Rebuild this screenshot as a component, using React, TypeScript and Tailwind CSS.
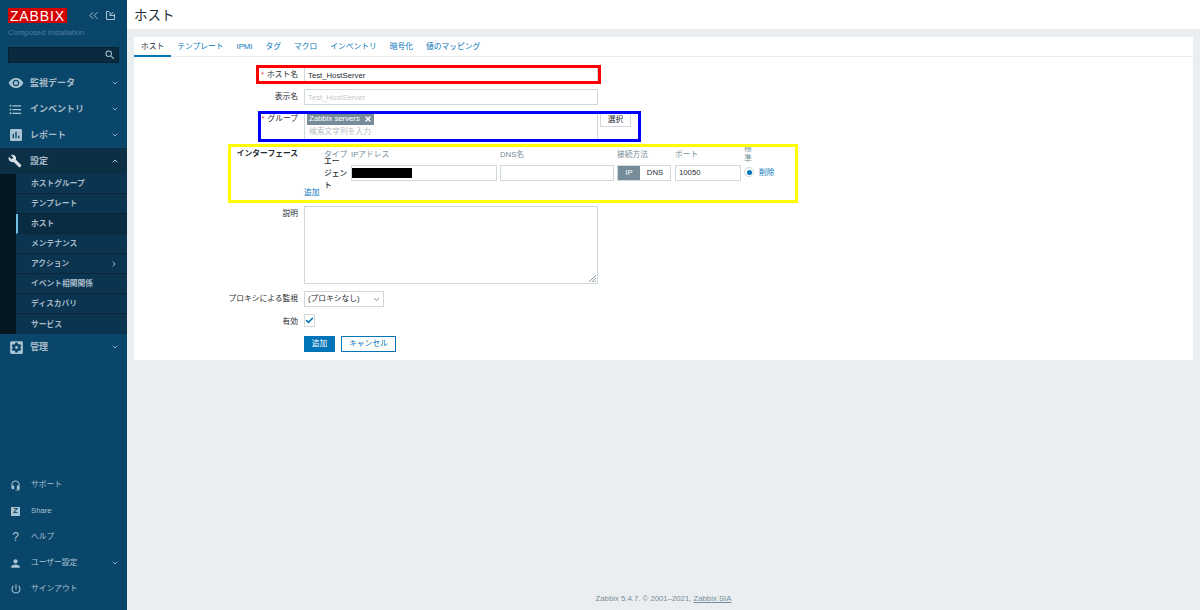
// App.tsx
import { ReactNode } from "react";
import { ChevronDown, ChevronRight, ChevronUp, ChevronsLeft, Check, X } from "lucide-react";
import {
  MdAssessment,
  MdBuild,
  MdFormatListBulleted,
  MdHeadsetMic,
  MdPerson,
  MdPowerSettingsNew,
  MdSearch,
  MdSettingsApplications,
  MdVisibility,
} from "react-icons/md";

const subItems = ["ホストグループ", "テンプレート", "ホスト", "メンテナンス", "アクション", "イベント相関関係", "ディスカバリ", "サービス"];
const tabs = ["ホスト", "テンプレート", "IPMI", "タグ", "マクロ", "インベントリ", "暗号化", "値のマッピング"];

function MenuItem({ icon, label, open, active }: { icon: ReactNode; label: string; open?: boolean; active?: boolean }) {
  return (
    <div className={`flex h-[26px] items-center pl-2 pr-[8px] ${active ? "bg-[#0b2f45]" : ""}`}>
      <div className="flex w-[22px] justify-start text-[#a9c4d4]">{icon}</div>
      <span className="flex-1 pt-[2px] text-[9px] font-bold text-[#a9bcc9]">{label}</span>
      {open ? <ChevronUp size={8} strokeWidth={3} className="text-[#b4c6d2]" /> : <ChevronDown size={8} strokeWidth={3} className="text-[#8fb0c4]" />}
    </div>
  );
}

function BottomItem({ icon, label, chevron }: { icon: ReactNode; label: string; chevron?: boolean }) {
  return (
    <div className="flex h-[26px] items-center pl-[8px] pr-[8px]">
      <div className="flex w-[23px] justify-center pr-[8px] text-[#a9c4d4]">{icon}</div>
      <span className="flex-1 text-[7.75px] text-[#a9c4d4]">{label}</span>
      {chevron && <ChevronDown size={8} strokeWidth={3} className="text-[#8fb0c4]" />}
    </div>
  );
}

function Row({ label, required, bold, children, className }: { label: string; required?: boolean; bold?: boolean; children: ReactNode; className?: string }) {
  return (
    <div className={`flex ${className ?? ""}`}>
      <div className={`w-[164px] pt-[2px] text-right text-[7.75px] leading-[12px] text-[#1f2c33] ${bold ? "font-bold" : ""}`}>
        {required && <span className="mr-[3px] text-[#e33734]">*</span>}
        {label}
      </div>
      <div className="ml-[6px] min-w-0 flex-1">{children}</div>
    </div>
  );
}

export default function App() {
  return (
    <div className="flex h-[610px] w-[1200px] overflow-hidden bg-[#ebeef0] font-['Liberation_Sans','Noto_Sans_CJK_JP',sans-serif]">
      {/* sidebar */}
      <aside className="flex h-full w-[127px] shrink-0 flex-col bg-[#0a466a]">
        <div className="flex items-start justify-between pl-2 pr-[12px] pt-2">
          <div className="flex h-[15px] w-[59px] items-center justify-center bg-[#d40000] text-[14px] leading-none tracking-[0.9px] text-white">ZABBIX</div>
          <div className="flex items-center gap-[5px] text-[#a9c4d4]">
            <ChevronsLeft size={15} strokeWidth={1.5} />
            <svg width="9" height="9" viewBox="0 0 9 9" fill="none" stroke="currentColor">
              <path d="M3 .5H.5v8h8V3" />
              <path d="M4 1v3.5h4" />
              <path d="M4 4.5 7.5 1" />
            </svg>
          </div>
        </div>
        <div className="ml-2 mt-[4px] text-[7.75px] leading-[12px] text-[#4f7f9c]">Composed installation</div>
        <div className="mx-2 mt-[8px] flex h-[16px] items-center justify-end border border-[#06202f] bg-[#0a2a3f] pr-[2px] text-[#a9c4d4]">
          <MdSearch size={12} />
        </div>

        <div className="mt-[7px]">
          <MenuItem icon={<MdVisibility size={16} />} label="監視データ" />
          <MenuItem icon={<MdFormatListBulleted size={15} />} label="インベントリ" />
          <MenuItem icon={<MdAssessment size={16} />} label="レポート" />
          <MenuItem icon={<MdBuild size={14} className="text-[#d5dfe5]" />} label="設定" open active />
          <div className="flex">
            <div className="w-4 bg-[#04161f]" />
            <div className="flex-1 bg-[#0b3450]">
              {subItems.map((s) => (
                <div
                  key={s}
                  className={`flex h-[20px] items-center justify-between border-b border-[#0a2638] pr-[9px] pt-[1px] text-[7.75px] font-bold text-[#a9bcc9] last:border-b-0 ${
                    s === "ホスト" ? "border-l-[2px] border-l-[#74bfe8] bg-[#0a2c43] pl-[13px]" : "pl-[15px]"
                  }`}
                >
                  <span>{s}</span>
                  {s === "アクション" && <ChevronRight size={8} strokeWidth={3} />}
                </div>
              ))}
            </div>
          </div>
          <MenuItem icon={<MdSettingsApplications size={17} />} label="管理" />
        </div>

        <div className="mb-[8px] mt-auto">
          <BottomItem icon={<MdHeadsetMic size={11} />} label="サポート" />
          <BottomItem
            icon={<div className="flex h-[9px] w-[9px] items-center justify-center bg-[#a9c4d4] text-[8px] font-bold leading-none text-[#0a466a]">Z</div>}
            label="Share"
          />
          <BottomItem icon={<span className="text-[12px] leading-none">?</span>} label="ヘルプ" />
          <BottomItem icon={<MdPerson size={13} />} label="ユーザー設定" chevron />
          <BottomItem icon={<MdPowerSettingsNew size={12} />} label="サインアウト" />
        </div>
      </aside>

      {/* main */}
      <main className="flex min-w-0 flex-1 flex-col">
        <header className="flex h-[29px] items-center bg-white pl-[7px] pt-[3px] text-[13.5px] text-[#1f2c33]">ホスト</header>

        <section className="relative mx-[7px] mt-[8px] h-[323px] bg-white">
          <nav className="flex h-[20px] items-center gap-[13px] border-b border-[#ebeef0] pl-[7px] text-[7.75px] text-[#0275b8]">
            {tabs.map((t, i) => (
              <span key={t} className={i === 0 ? "relative -mx-[7px] px-[7px] text-[#1f2c33]" : ""}>
                {t}
                {i === 0 && <span className="absolute -bottom-[5px] left-0 right-0 h-[2px] bg-[#0275b8]" />}
              </span>
            ))}
          </nav>

          <div className="flex flex-col pt-[10px]">
            <Row label="ホスト名" required className="mb-[6px]">
              <input
                readOnly
                value="Test_HostServer"
                className="block h-[16px] w-[294px] border border-[#cfd8dc] px-[3px] text-[7.75px] text-[#1f2c33] outline-none"
              />
            </Row>
            <Row label="表示名" className="mb-[6px]">
              <input
                readOnly
                placeholder="Test_HostServer"
                className="block h-[16px] w-[294px] border border-[#cfd8dc] px-[3px] text-[7.75px] outline-none placeholder:text-[#c4cacd]"
              />
            </Row>
            <Row label="グループ" required className="mb-[6px]">
              <div className="flex items-start">
                <div className="h-[29px] w-[294px] border border-[#cfd8dc] pl-[2px] pt-[1px]">
                  <div className="flex h-[12px] w-fit items-center gap-[4px] bg-[#768d99] pl-[2px] pr-[2px] text-[7.75px] text-white">
                    Zabbix servers
                    <X size={8} strokeWidth={4} />
                  </div>
                  <div className="pl-[2px] pt-[1px] text-[7.75px] leading-[12px] text-[#b4bcc0]">検索文字列を入力</div>
                </div>
                <button className="ml-[2px] mt-[2px] h-[14px] w-[31px] border border-[#cfd8dc] bg-white text-[7.75px] leading-none text-[#1f2c33]">選択</button>
              </div>
            </Row>

            <Row label="インターフェース" bold className="mb-[6px] h-[54px]">
              <div className="grid grid-cols-[27px_149px_117px_58px_69px_15px_auto] grid-rows-[19px_auto] pl-[20px] text-[7.75px] leading-[12px] text-[#768d99]">
                <div className="pt-[3px]">タイプ</div>
                <div className="pt-[3px]">IPアドレス</div>
                <div className="pt-[3px]">DNS名</div>
                <div className="pt-[3px]">接続方法</div>
                <div className="pt-[3px]">ポート</div>
                <div className="-mt-[2px] h-[19px] w-[10px] leading-[10px]">標準</div>
                <div />

                <div className="-mt-[9px] font-medium text-[#1f2c33]">
                  エー
                  <br />
                  ジェン
                  <br />ト
                </div>
                <div className="relative">
                  <div className="h-[16px] w-[146px] border border-[#cfd8dc] bg-white" />
                  <div className="absolute left-[1px] top-[3px] h-[10px] w-[60px] bg-black" />
                </div>
                <div className="h-[16px] w-[114px] border border-[#cfd8dc] bg-white" />
                <div className="flex h-[16px] w-[54px] border border-[#cfd8dc] leading-[14px]">
                  <div className="w-[22px] bg-[#768d99] text-center text-white">IP</div>
                  <div className="flex-1 text-center text-[#1f2c33]">DNS</div>
                </div>
                <div className="h-[16px] w-[66px] border border-[#cfd8dc] pl-[3px] leading-[14px] text-[#1f2c33]">10050</div>
                <div className="mt-[2px] flex h-[10px] w-[10px] items-center justify-center rounded-full border border-[#cfd8dc]">
                  <div className="h-[5px] w-[5px] rounded-full bg-[#0275b8]" />
                </div>
                <div className="mt-[2px] text-[#0275b8]">削除</div>
              </div>
              <div className="-mt-[5px] text-[7.75px] leading-[12px] text-[#0275b8]">追加</div>
            </Row>

            <Row label="説明" className="mb-[7px]">
              <div className="relative h-[78px] w-[294px] border border-[#cfd8dc]">
                <svg className="absolute bottom-[1px] right-[1px]" width="7" height="7" viewBox="0 0 7 7" stroke="#8a979e">
                  <path d="M0 7 7 0M3 7l4-4M5.5 7 7 5.5" />
                </svg>
              </div>
            </Row>
            <Row label="プロキシによる監視" className="mb-[7px]">
              <div className="flex h-[16px] w-[80px] items-center justify-between border border-[#cfd8dc] pl-[3px] pr-[2px] text-[7.75px] text-[#1f2c33]">
                (プロキシなし)
                <ChevronDown size={9} strokeWidth={2} className="text-[#5a6a72]" />
              </div>
            </Row>
            <Row label="有効" className="mb-[8px]">
              <div className="flex h-[13px] w-[11px] items-center justify-center border border-[#cfd8dc]">
                <Check size={9} strokeWidth={4} className="text-[#0275b8]" />
              </div>
            </Row>
            <Row label="">
              <div className="flex gap-[6px]">
                <button className="h-[16px] w-[31px] bg-[#0275b8] text-[7.75px] leading-none text-white">追加</button>
                <button className="h-[16px] w-[55px] border border-[#0275b8] text-[7.75px] leading-none text-[#0275b8]">キャンセル</button>
              </div>
            </Row>
          </div>

          {/* 注釈の枠 */}
          <div className="absolute left-[122px] top-[28px] h-[19px] w-[345px] border-[3px] border-[#ff0000]" />
          <div className="absolute left-[124px] top-[74px] h-[31px] w-[383px] border-[3px] border-[#0000ff]" />
          <div className="absolute left-[94px] top-[107px] h-[59px] w-[570px] border-[3px] border-[#ffff00]" />
        </section>

        <footer className="mt-auto pb-[5px] text-center text-[7.75px] leading-[12px] text-[#768d99]">
          Zabbix 5.4.7. © 2001–2021, <span className="underline">Zabbix SIA</span>
        </footer>
      </main>
    </div>
  );
}
